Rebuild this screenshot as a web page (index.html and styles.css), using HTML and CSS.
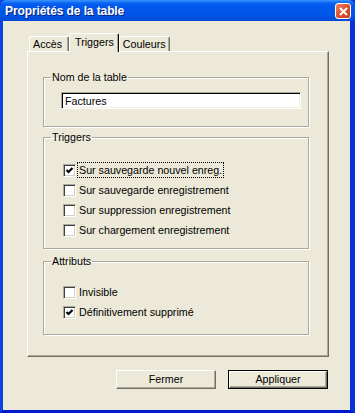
FILE: index.html
```html
<!DOCTYPE html>
<html lang="fr">
<head>
  <meta charset="UTF-8" />
  <title>Propriétés de la table</title>
  <link rel="stylesheet" href="styles.css">
</head>
<body>

  <div class="fenetre">

    <!-- Barre de titre -->
    <div class="titre">
      <span class="titre-texte">Propriétés de la table</span>
      <span class="fermer-x">
        <svg width="9" height="9" viewBox="0 0 9 9">
          <path d="M1 1 L8 8 M8 1 L1 8" stroke="#fff" stroke-width="2" fill="none" />
        </svg>
      </span>
    </div>

    <div class="client">

      <!-- Onglets -->
      <div class="onglets">
        <div class="onglet">Accès</div>
        <div class="onglet actif">Triggers</div>
        <div class="onglet">Couleurs</div>
      </div>

      <div class="panneau">

        <fieldset class="groupe groupe-nom">
          <legend>Nom de la table</legend>
          <div class="champ">Factures</div>
        </fieldset>

        <fieldset class="groupe groupe-triggers">
          <legend>Triggers</legend>
          <div class="case"><span class="boite coche"></span><span class="libelle focus">Sur sauvegarde nouvel enreg.</span></div>
          <div class="case"><span class="boite"></span><span class="libelle">Sur sauvegarde enregistrement</span></div>
          <div class="case"><span class="boite"></span><span class="libelle">Sur suppression enregistrement</span></div>
          <div class="case"><span class="boite"></span><span class="libelle">Sur chargement enregistrement</span></div>
        </fieldset>

        <fieldset class="groupe groupe-attributs">
          <legend>Attributs</legend>
          <div class="case"><span class="boite"></span><span class="libelle">Invisible</span></div>
          <div class="case"><span class="boite coche"></span><span class="libelle">Définitivement supprimé</span></div>
        </fieldset>

      </div>

      <!-- Boutons -->
      <div class="boutons">
        <div class="bouton">Fermer</div>
        <div class="bouton defaut"><div class="bouton-int">Appliquer</div></div>
      </div>

    </div>
  </div>

</body>
</html>
```

FILE: styles.css
```css
body {
  margin: 0;
  font-family: 'Liberation Sans', Arial, sans-serif;
  font-size: 10.7px;
  color: #000;
}

.fenetre {
  width: 355px;
  height: 413px;
  box-sizing: border-box;
  display: flex;
  flex-direction: column;
  background: #0831d9;
  border-left: 3px solid #0842e0;
  border-right: 5px solid #0831d9;
  border-bottom: 3px solid #0019cf;
}

.titre {
  height: 21px;
  margin-left: -3px;
  margin-right: -5px;
  padding: 0 4px 0 5px;
  display: flex;
  align-items: center;
  justify-content: space-between;
  background: linear-gradient(to bottom, #3d95ff 0, #0a64f2 3px, #0058ee 6px, #0055e8 15px, #0049d6 21px);
  border-radius: 6px 6px 0 0;
}

.titre-texte {
  color: #fff;
  font-family: 'Liberation Sans', Arial, sans-serif;
  font-weight: bold;
  font-size: 12px;
  letter-spacing: -0.1px;
  text-shadow: 1px 1px 0 #0a1e80;
  margin-top: 1px;
}

.fermer-x {
  width: 16px;
  height: 16px;
  box-sizing: border-box;
  border: 1px solid #fff;
  border-radius: 3px;
  background: linear-gradient(135deg, #ec8467, #e0502c 50%, #c8401c);
  display: flex;
  align-items: center;
  justify-content: center;
  margin-top: 1px;
}

.client {
  flex: 1;
  background: #ece9d8;
  padding: 12px 0 0 24px;
}

.onglets {
  display: flex;
  align-items: flex-end;
  padding-left: 2px;
  height: 18px;
  position: relative;
  z-index: 1;
}

.onglet {
  height: 14px;
  line-height: 15px;
  padding: 0 3px;
  border-top: 1px solid #fff;
  border-left: 1px solid #fff;
  border-right: 1px solid #716f64;
  box-shadow: inset -1px 0 0 #aca899;
  border-radius: 2px 2px 0 0;
}

.onglet.actif {
  height: 18px;
  line-height: 17px;
  margin-bottom: -1px;
  background: #ece9d8;
  border-left: 1px solid #fff;
  border-right: 1px solid #000;
  padding: 0 4px 0 5px;
}

.onglet:first-child {
  width: 32px;
}

.panneau {
  width: 302px;
  height: 306px;
  box-sizing: border-box;
  border-top: 1px solid #fff;
  border-left: 1px solid #fff;
  border-right: 1px solid #716f64;
  border-bottom: 1px solid #716f64;
  box-shadow: inset -1px -1px 0 #aca899;
  padding: 19px 0 0 15px;
}

.groupe {
  width: 266px;
  box-sizing: border-box;
  margin: 0 0 4px;
  padding: 0;
  border: 1px solid #aca899;
  box-shadow: 1px 1px 0 #fff, inset 1px 1px 0 #fff;
}

.groupe legend {
  margin-left: 7px;
  padding: 0 1px;
  line-height: 13px;
}

.groupe-nom {
  height: 56px;
}

.groupe-triggers {
  height: 118px;
  padding-top: 16px;
}

.groupe-attributs {
  height: 80px;
  margin-top: 6px;
  padding-top: 14px;
}

.champ {
  margin: 8px 0 0 17px;
  width: 240px;
  height: 17px;
  box-sizing: border-box;
  background: #fff;
  border-top: 1px solid #aca899;
  border-left: 1px solid #aca899;
  border-right: 1px solid #fff;
  border-bottom: 1px solid #fff;
  box-shadow: inset 1px 1px 0 #000, inset -1px -1px 0 #f1efe2;
  padding: 1px 0 0 3px;
  line-height: 14px;
}

.case {
  display: flex;
  align-items: center;
  height: 20px;
  padding-left: 19px;
}

.boite {
  width: 13px;
  height: 13px;
  box-sizing: border-box;
  background: #fff;
  border-top: 1px solid #aca899;
  border-left: 1px solid #aca899;
  border-right: 1px solid #fff;
  border-bottom: 1px solid #fff;
  box-shadow: inset 1px 1px 0 #404040, inset -1px -1px 0 #d4d0c8;
  margin-right: 1px;
}

.boite.coche {
  background: #fff url("data:image/svg+xml,%3Csvg xmlns='http://www.w3.org/2000/svg' width='11' height='11'%3E%3Cpath d='M2.5 5 L4.5 7 L8.5 3' stroke='%23000' stroke-width='2.2' fill='none'/%3E%3C/svg%3E") no-repeat 0 0;
}

.libelle {
  padding: 1px 1px;
  border: 1px solid transparent;
}

.libelle.focus {
  border: 1px dotted #000;
}

.boutons {
  display: flex;
  gap: 12px;
  margin-top: 13px;
  padding-left: 89px;
}

.bouton {
  width: 100px;
  height: 19px;
  box-sizing: border-box;
  border-top: 1px solid #fff;
  border-left: 1px solid #fff;
  border-right: 1px solid #716f64;
  border-bottom: 1px solid #716f64;
  box-shadow: inset -1px -1px 0 #aca899;
  text-align: center;
  line-height: 17px;
}

.bouton.defaut {
  border: 1px solid #000;
  box-shadow: none;
}

.bouton-int {
  height: 17px;
  box-sizing: border-box;
  border-top: 1px solid #fff;
  border-left: 1px solid #fff;
  border-right: 1px solid #716f64;
  border-bottom: 1px solid #716f64;
  box-shadow: inset -1px -1px 0 #aca899;
  line-height: 15px;
}
```
